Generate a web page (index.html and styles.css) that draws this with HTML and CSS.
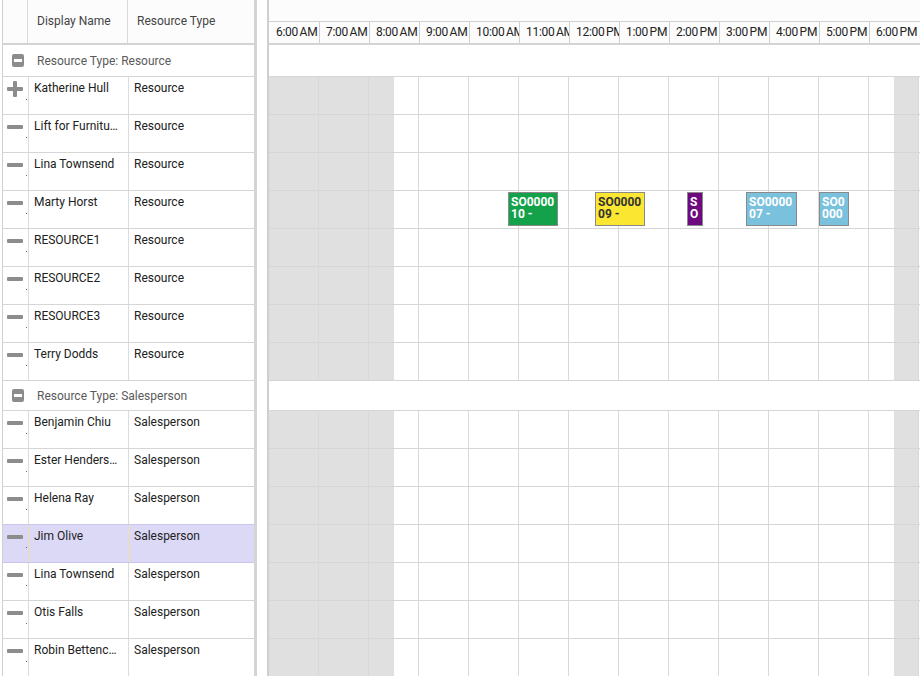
FILE: index.html
```html
<!DOCTYPE html>
<html>
<head>
<meta charset="utf-8">
<link rel="stylesheet" href="styles.css">
</head>
<body>
<div class="app">
  <section class="grid">
    <div class="grid-inner">
      <div class="grid-head">
        <div class="gh-cell"></div>
        <div class="gh-cell">Display Name</div>
        <div class="gh-cell">Resource Type</div>
      </div>

      <div class="group g1"><span class="gbox"></span>Resource Type: Resource</div>
      <div class="row"><div class="c-icon"><svg class="ico" width="16" height="16" viewBox="0 0 16 16"><rect x="0" y="6" width="16" height="4" rx="1"/><rect x="6" y="0" width="4" height="16" rx="1"/></svg></div><div class="c-name">Katherine Hull</div><div class="c-type">Resource</div></div>
      <div class="row"><div class="c-icon"><span class="minus"></span></div><div class="c-name">Lift for Furniture Delivery</div><div class="c-type">Resource</div></div>
      <div class="row"><div class="c-icon"><span class="minus"></span></div><div class="c-name">Lina Townsend</div><div class="c-type">Resource</div></div>
      <div class="row"><div class="c-icon"><span class="minus"></span></div><div class="c-name">Marty Horst</div><div class="c-type">Resource</div></div>
      <div class="row"><div class="c-icon"><span class="minus"></span></div><div class="c-name">RESOURCE1</div><div class="c-type">Resource</div></div>
      <div class="row"><div class="c-icon"><span class="minus"></span></div><div class="c-name">RESOURCE2</div><div class="c-type">Resource</div></div>
      <div class="row"><div class="c-icon"><span class="minus"></span></div><div class="c-name">RESOURCE3</div><div class="c-type">Resource</div></div>
      <div class="row"><div class="c-icon"><span class="minus"></span></div><div class="c-name">Terry Dodds</div><div class="c-type">Resource</div></div>

      <div class="group g2"><span class="gbox"></span>Resource Type: Salesperson</div>
      <div class="row"><div class="c-icon"><span class="minus"></span></div><div class="c-name">Benjamin Chiu</div><div class="c-type">Salesperson</div></div>
      <div class="row"><div class="c-icon"><span class="minus"></span></div><div class="c-name">Ester Henderson</div><div class="c-type">Salesperson</div></div>
      <div class="row"><div class="c-icon"><span class="minus"></span></div><div class="c-name">Helena Ray</div><div class="c-type">Salesperson</div></div>
      <div class="row sel"><div class="c-icon"><span class="minus"></span></div><div class="c-name">Jim Olive</div><div class="c-type">Salesperson</div></div>
      <div class="row"><div class="c-icon"><span class="minus"></span></div><div class="c-name">Lina Townsend</div><div class="c-type">Salesperson</div></div>
      <div class="row"><div class="c-icon"><span class="minus"></span></div><div class="c-name">Otis Falls</div><div class="c-type">Salesperson</div></div>
      <div class="row"><div class="c-icon"><span class="minus"></span></div><div class="c-name">Robin Bettencourt</div><div class="c-type">Salesperson</div></div>
    </div>
  </section>

  <div class="splitter"></div>

  <section class="sched">
    <div class="s-head">
      <div class="s-top"></div>
      <div class="s-times">
        <div class="t">6:00 AM</div><div class="t">7:00 AM</div><div class="t">8:00 AM</div><div class="t">9:00 AM</div><div class="t">10:00 AM</div><div class="t">11:00 AM</div><div class="t">12:00 PM</div><div class="t">1:00 PM</div><div class="t">2:00 PM</div><div class="t">3:00 PM</div><div class="t">4:00 PM</div><div class="t">5:00 PM</div><div class="t">6:00 PM</div>
      </div>
    </div>

    <div class="s-group g1"></div>
    <div class="s-row"><span></span><span></span><span></span><span></span><span></span><span></span><span></span><span></span><span></span><span></span><span></span><span></span><span></span></div>
    <div class="s-row"><span></span><span></span><span></span><span></span><span></span><span></span><span></span><span></span><span></span><span></span><span></span><span></span><span></span></div>
    <div class="s-row"><span></span><span></span><span></span><span></span><span></span><span></span><span></span><span></span><span></span><span></span><span></span><span></span><span></span></div>
    <div class="s-row"><span></span><span></span><span></span><span></span><span></span><span></span><span></span><span></span><span></span><span></span><span></span><span></span><span></span>
      <div class="ev green" style="left:239px;width:50px">SO0000<br>10 -</div>
      <div class="ev yellow" style="left:326px;width:50px">SO0000<br>09 -</div>
      <div class="ev purple" style="left:418px;width:16px">S<br>O</div>
      <div class="ev blue" style="left:477px;width:51px">SO0000<br>07 -</div>
      <div class="ev blue" style="left:550px;width:30px">SO0<br>000</div>
    </div>
    <div class="s-row"><span></span><span></span><span></span><span></span><span></span><span></span><span></span><span></span><span></span><span></span><span></span><span></span><span></span></div>
    <div class="s-row"><span></span><span></span><span></span><span></span><span></span><span></span><span></span><span></span><span></span><span></span><span></span><span></span><span></span></div>
    <div class="s-row"><span></span><span></span><span></span><span></span><span></span><span></span><span></span><span></span><span></span><span></span><span></span><span></span><span></span></div>
    <div class="s-row"><span></span><span></span><span></span><span></span><span></span><span></span><span></span><span></span><span></span><span></span><span></span><span></span><span></span></div>

    <div class="s-group g2"></div>
    <div class="s-row"><span></span><span></span><span></span><span></span><span></span><span></span><span></span><span></span><span></span><span></span><span></span><span></span><span></span></div>
    <div class="s-row"><span></span><span></span><span></span><span></span><span></span><span></span><span></span><span></span><span></span><span></span><span></span><span></span><span></span></div>
    <div class="s-row"><span></span><span></span><span></span><span></span><span></span><span></span><span></span><span></span><span></span><span></span><span></span><span></span><span></span></div>
    <div class="s-row"><span></span><span></span><span></span><span></span><span></span><span></span><span></span><span></span><span></span><span></span><span></span><span></span><span></span></div>
    <div class="s-row"><span></span><span></span><span></span><span></span><span></span><span></span><span></span><span></span><span></span><span></span><span></span><span></span><span></span></div>
    <div class="s-row"><span></span><span></span><span></span><span></span><span></span><span></span><span></span><span></span><span></span><span></span><span></span><span></span><span></span></div>
    <div class="s-row"><span></span><span></span><span></span><span></span><span></span><span></span><span></span><span></span><span></span><span></span><span></span><span></span><span></span></div>
  </section>
</div>
</body>
</html>
```

FILE: styles.css
```css
* { box-sizing: border-box; }

html, body {
  margin: 0;
  padding: 0;
  background: #ffffff;
}

body {
  font-family: Roboto, "Liberation Sans", Arial, sans-serif;
  font-size: 12px;
  color: #212121;
}

.app {
  display: flex;
  width: 920px;
  height: 676px;
  overflow: hidden;
}

/* ---------- left grid ---------- */
.grid {
  flex: 0 0 257px;
  padding-left: 2px;
  border-right: 3px solid #d4d4d4;
  overflow: hidden;
}

.grid-inner {
  border-left: 1px solid #d0d0d0;
  min-height: 100%;
}

.grid-head {
  display: grid;
  grid-template-columns: 25px 100px 1fr;
  height: 45px;
  border-bottom: 2px solid #d4d4d4;
  background: #fcfcfc;
}

.gh-cell {
  display: flex;
  align-items: center;
  padding-left: 9px;
  padding-bottom: 2px;
  border-right: 1px solid #d9d9d9;
  color: #444444;
}
.gh-cell:last-child { border-right: 0; }

.group {
  display: flex;
  align-items: center;
  border-bottom: 1px solid #d6d6d6;
  color: #5a5a5a;
  background: #ffffff;
}
.g1 { height: 32px; }
.g2 { height: 30px; }

.gbox {
  position: relative;
  width: 12px;
  height: 13px;
  margin-left: 9px;
  margin-right: 13px;
  border-radius: 2px;
  background: #8c8c8c;
}
.gbox::after {
  content: "";
  position: absolute;
  left: 2px;
  right: 2px;
  top: 5px;
  height: 3px;
  background: #ffffff;
}

.row {
  display: grid;
  grid-template-columns: 26px 100px 1fr;
  height: 38px;
  border-bottom: 1px solid #d6d6d6;
  background: #ffffff;
}

.row > div {
  border-right: 1px solid #dcdcdc;
  padding-top: 4px;
  line-height: 14px;
  white-space: nowrap;
  overflow: hidden;
  text-overflow: ellipsis;
}
.row > div:last-child { border-right: 0; }

.c-icon {
  position: relative;
  padding-left: 4px;
}
.c-icon::after {
  content: "";
  position: absolute;
  left: 23px;
  top: 22px;
  width: 1px;
  height: 1px;
  background: #666666;
}

.minus {
  display: block;
  width: 16px;
  height: 4px;
  margin-top: 6px;
  border-radius: 1px;
  background: #8c8c8c;
}

.ico {
  display: block;
  fill: #8c8c8c;
}

.c-name, .c-type {
  padding-left: 5px;
  padding-right: 8px;
}

.row.sel {
  background: #dcd9f7;
  border-bottom-color: #c9c6ec;
  box-shadow: 0 -1px 0 #c9c6ec;
}
.row.sel > div { border-right-color: #f1dea6; }
.row.sel > div:last-child { border-right: 0; }

/* ---------- splitter ---------- */
.splitter {
  flex: 0 0 10px;
  background: #ffffff;
}

/* ---------- scheduler ---------- */
.sched {
  flex: 1 1 auto;
  border-left: 2px solid #cfcfcf;
  overflow: hidden;
}

.s-head {
  background: #fcfcfc;
}

.s-top { height: 21px; }

.s-times {
  display: flex;
  height: 24px;
  border-top: 1px solid #d0d0d0;
  border-bottom: 2px solid #d4d4d4;
}

.t {
  flex: 0 0 50px;
  width: 50px;
  border-left: 1px solid #cfcfcf;
  padding-left: 6px;
  line-height: 21px;
  white-space: nowrap;
  overflow: hidden;
  letter-spacing: -0.3px;
  word-spacing: -1px;
  color: #222222;
}
.t:first-child { border-left: 0; padding-left: 7px; }

.s-group {
  border-bottom: 1px solid #d6d6d6;
  background: #ffffff;
}

.s-row {
  position: relative;
  display: flex;
  height: 38px;
  border-bottom: 1px solid #d6d6d6;
  background: linear-gradient(to right, #e0e0e0 0, #e0e0e0 125px, #ffffff 125px, #ffffff 625px, #e0e0e0 625px, #e0e0e0 650px, #ffffff 650px);
}

.s-row > span {
  flex: 0 0 50px;
  border-right: 1px solid #d9d9d9;
}

.ev {
  position: absolute;
  top: 1px;
  height: 34px;
  padding: 3px 2px 0;
  border: 1px solid #8a8a8a;
  font-weight: 700;
  font-size: 12px;
  line-height: 12px;
  color: #ffffff;
  overflow: hidden;
  white-space: nowrap;
}

.green { background: #13a24a; }
.yellow { background: #fbe732; color: #333333; }
.purple { background: #6d0a80; }
.blue { background: #79c1dd; }
```
